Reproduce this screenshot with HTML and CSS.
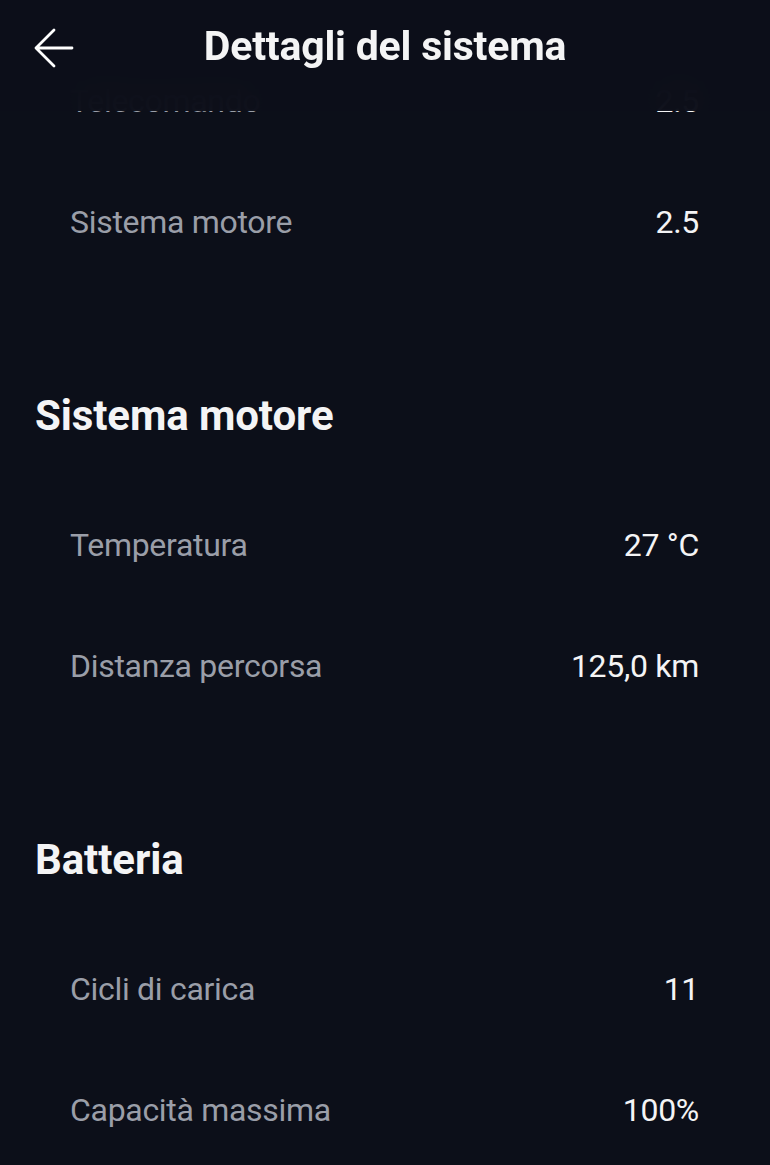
FILE: index.html
```html
<!doctype html>
<html lang="it">
<head>
<meta charset="utf-8">
<title>Dettagli del sistema</title>
<meta name="viewport" content="width=device-width, initial-scale=1.0">
<link rel="stylesheet" href="styles.css">
</head>
<body>

<header class="topbar">
	<div class="topbar-inner">
		<a class="back" href="#" aria-label="Indietro">
			<svg width="40" height="40" viewBox="0 0 40 40" fill="none" stroke="currentColor" stroke-width="2.8" stroke-linecap="round" stroke-linejoin="round">
				<path d="M38 20H2M20 2L2 20L20 38"/>
			</svg>
		</a>
		<h1>Dettagli del sistema</h1>
	</div>
</header>

<main class="details">
	<section class="group first">
		<dl>
			<div class="row"><dt>Telecomando</dt><dd>2.5</dd></div>
			<div class="row"><dt>Sistema motore</dt><dd>2.5</dd></div>
		</dl>
	</section>

	<section class="group">
		<h2>Sistema motore</h2>
		<dl>
			<div class="row"><dt>Temperatura</dt><dd>27 °C</dd></div>
			<div class="row"><dt>Distanza percorsa</dt><dd>125,0 km</dd></div>
		</dl>
	</section>

	<section class="group">
		<h2>Batteria</h2>
		<dl>
			<div class="row"><dt>Cicli di carica</dt><dd>11</dd></div>
			<div class="row"><dt>Capacità massima</dt><dd>100%</dd></div>
		</dl>
	</section>
</main>

</body>
</html>
```

FILE: styles.css
```css
html, body {
	margin: 0;
	height: 100%;
	overflow: hidden;
}
body {
	background: #0c0f19;
	color: #f4f4f5;
	font-family: Roboto, "Liberation Sans", sans-serif;
}

/* top bar, lies over the list */
.topbar {
	position: fixed;
	top: 0; left: 0;
	right: 0;
	height: 111px;
	z-index: 2;
	background: rgba(12, 15, 25, 0.96);
	-webkit-backdrop-filter: blur(20px);
	backdrop-filter: blur(20px);
}
.topbar-inner {
	position: relative;
	height: 94px;
	display: flex;
	align-items: center;
	justify-content: center;
}
.topbar h1 {
	margin: 0;
	font-size: 41px;
	font-weight: 700;
	letter-spacing: -0.2px;
	line-height: 1;
	padding-bottom: 2px;
}
.back {
	position: absolute;
	left: 34px;
	top: 28px;
	width: 40px;
	height: 40px;
	color: #fff;
	display: block;
}
.back svg {
	display: block;
}

/* list */
.details {
	padding-top: 40px;
}
.group {
	padding-top: 110px;
}
.group.first {
	padding-top: 0;
}
.group h2 {
	margin: 0 0 44px 35px;
	height: 48px;
	line-height: 48px;
	font-size: 42px;
	font-weight: 700;
	letter-spacing: -0.1px;
}
.group dl {
	margin: 0;
}
.row {
	height: 121px;
	display: flex;
	align-items: center;
	justify-content: space-between;
	padding: 0 71px 0 70px;
	font-size: 32px;
	letter-spacing: -0.3px;
}
.row dt {
	color: #9a9ea8;
}
.row dd {
	margin: 0;
	color: #f4f4f5;
}
```
